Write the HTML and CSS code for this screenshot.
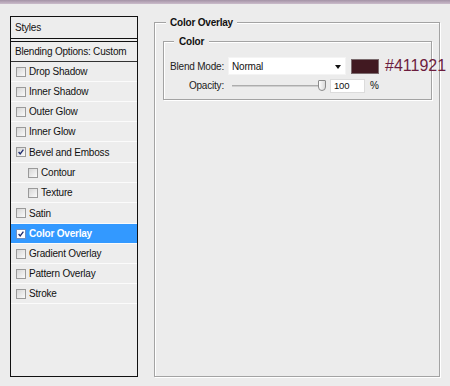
FILE: index.html
```html
<!DOCTYPE html>
<html>
<head>
<meta charset="utf-8">
<link rel="stylesheet" href="styles.css">
</head>
<body>
<div class="titlebar"></div>
<div class="dialog">
  <div class="styles-panel">
    <div class="panel-head">Styles</div>
    <div class="blend-opts">Blending Options: Custom</div>
    <ul class="fx-list">
      <li class="fx"><span class="cb"></span>Drop Shadow</li>
      <li class="fx"><span class="cb"></span>Inner Shadow</li>
      <li class="fx"><span class="cb"></span>Outer Glow</li>
      <li class="fx"><span class="cb"></span>Inner Glow</li>
      <li class="fx tall"><span class="cb checked"><svg viewBox="0 0 10 10"><path d="M2 5 L4 7.5 L8 2" fill="none" stroke="#1c2a6e" stroke-width="1.6"/></svg></span>Bevel and Emboss</li>
      <li class="fx sub"><span class="cb"></span>Contour</li>
      <li class="fx sub"><span class="cb"></span>Texture</li>
      <li class="fx tall"><span class="cb"></span>Satin</li>
      <li class="fx selected"><span class="cb checked"><svg viewBox="0 0 10 10"><path d="M2 5 L4 7.5 L8 2" fill="none" stroke="#1c2a6e" stroke-width="1.6"/></svg></span>Color Overlay</li>
      <li class="fx"><span class="cb"></span>Gradient Overlay</li>
      <li class="fx"><span class="cb"></span>Pattern Overlay</li>
      <li class="fx"><span class="cb"></span>Stroke</li>
    </ul>
  </div>
  <div class="group outer">
    <div class="group-title outer-title">Color Overlay</div>
    <div class="group inner">
      <div class="group-title inner-title">Color</div>
      <div class="row row-blend">
        <span class="lbl">Blend Mode:</span>
        <div class="select">Normal<span class="arrow"></span></div>
        <div class="swatch"></div>
        <span class="hex">#411921</span>
      </div>
      <div class="row row-opacity">
        <span class="lbl">Opacity:</span>
        <div class="slider"><div class="track"></div><div class="thumb"></div></div>
        <div class="num">100</div>
        <span class="pct">%</span>
      </div>
    </div>
  </div>
</div>
</body>
</html>
```
FILE: styles.css
```css
html, body {
  margin: 0;
  padding: 0;
  background: #ececec;
  width: 450px;
  height: 386px;
  overflow: hidden;
}
body {
  font-family: "Liberation Sans", Arial, sans-serif;
  font-size: 10px;
  letter-spacing: -0.2px;
  color: #111;
}
.titlebar {
  height: 4px;
  background: linear-gradient(#a493a6, #cbbccb);
}
.dialog {
  display: flex;
  align-items: flex-start;
  padding: 12px 0 0 10px;
}
.styles-panel {
  width: 128px;
  height: 361px;
  box-sizing: border-box;
  border: 1px solid #111;
  background: #ededed;
  flex-shrink: 0;
}
.panel-head {
  height: 21px;
  line-height: 21px;
  padding-left: 4px;
  border-bottom: 1px solid #111;
  margin-bottom: 2px;
}
.blend-opts {
  height: 19px;
  line-height: 19px;
  padding-left: 4px;
  border-top: 1px solid #111;
  border-bottom: 1px solid #333;
}
.fx-list {
  list-style: none;
  margin: 0;
  padding: 0;
}
.fx {
  display: flex;
  align-items: center;
  height: 19px;
  border-bottom: 1px solid #fbfbfb;
  padding-left: 5px;
}
.fx.tall {
  height: 20px;
}
.fx.sub {
  padding-left: 17px;
}
.fx.selected {
  background: #3399ff;
  color: #fff;
  font-weight: bold;
}
.cb {
  width: 10px;
  height: 10px;
  box-sizing: border-box;
  border: 1px solid #9a9a9a;
  background: linear-gradient(135deg, #d6d6d6, #fafafa);
  margin-right: 3px;
  display: flex;
  flex-shrink: 0;
}
.cb svg {
  width: 8px;
  height: 8px;
}
.fx.selected .cb {
  background: #fff;
  border-color: #6d8fc0;
}
.group {
  border: 1px solid #a3a3a3;
  box-shadow: inset 1px 1px 0 #fff, 1px 1px 0 #fff;
}
.outer {
  margin-left: 16px;
  margin-top: 6px;
  width: 286px;
  height: 355px;
  box-sizing: border-box;
  padding: 0 7px 0 8px;
  flex-shrink: 0;
}
.group-title {
  display: inline-block;
  margin-top: -7px;
  height: 13px;
  line-height: 13px;
  font-weight: bold;
  background: #ececec;
  vertical-align: top;
}
.outer-title {
  margin-left: 3px;
  padding: 0 4px;
}
.inner {
  margin-top: 7px;
  padding: 0 0 6px 0;
}
.inner-title {
  margin-left: 10px;
  padding: 0 5px;
}
.row {
  display: flex;
  align-items: center;
  white-space: nowrap;
}
.row > * {
  flex-shrink: 0;
}
.row-blend {
  margin-top: 4px;
  height: 18px;
}
.row-opacity {
  margin-top: 3px;
  height: 15px;
}
.lbl {
  width: 60px;
  text-align: right;
  color: #222;
}
.select {
  margin-left: 4px;
  width: 118px;
  height: 18px;
  box-sizing: border-box;
  background: #fff;
  border: 1px solid #f4f4f4;
  padding-left: 3px;
  display: flex;
  align-items: center;
  justify-content: space-between;
  padding-right: 4px;
}
.arrow {
  width: 0;
  height: 0;
  border-left: 3.5px solid transparent;
  border-right: 3.5px solid transparent;
  border-top: 4px solid #111;
  margin-top: 1px;
}
.swatch {
  margin-left: 5px;
  width: 28px;
  height: 15px;
  box-sizing: border-box;
  background: #411921;
  border: 1px solid #7a6a6d;
}
.hex {
  margin-left: 6px;
  font-size: 16px;
  letter-spacing: 0;
  color: #6c1d3e;
  position: relative;
  z-index: 2;
}
.slider {
  margin-left: 8px;
  width: 94px;
  display: flex;
  align-items: center;
}
.track {
  flex: 1;
  height: 2px;
  background: linear-gradient(#9c9c9c, #e0e0e0);
}
.thumb {
  margin-left: -2px;
  width: 8px;
  height: 11px;
  box-sizing: border-box;
  border: 1px solid #8a8a8a;
  border-radius: 1px 1px 4px 4px;
  background: linear-gradient(90deg, #fdfdfd, #dadada);
  flex-shrink: 0;
}
.num {
  margin-left: 4px;
  width: 35px;
  height: 14px;
  box-sizing: border-box;
  background: #fff;
  border: 1px solid #dcdcdc;
  line-height: 12px;
  padding-left: 3px;
  font-size: 9.5px;
}
.pct {
  margin-left: 5px;
}
```
